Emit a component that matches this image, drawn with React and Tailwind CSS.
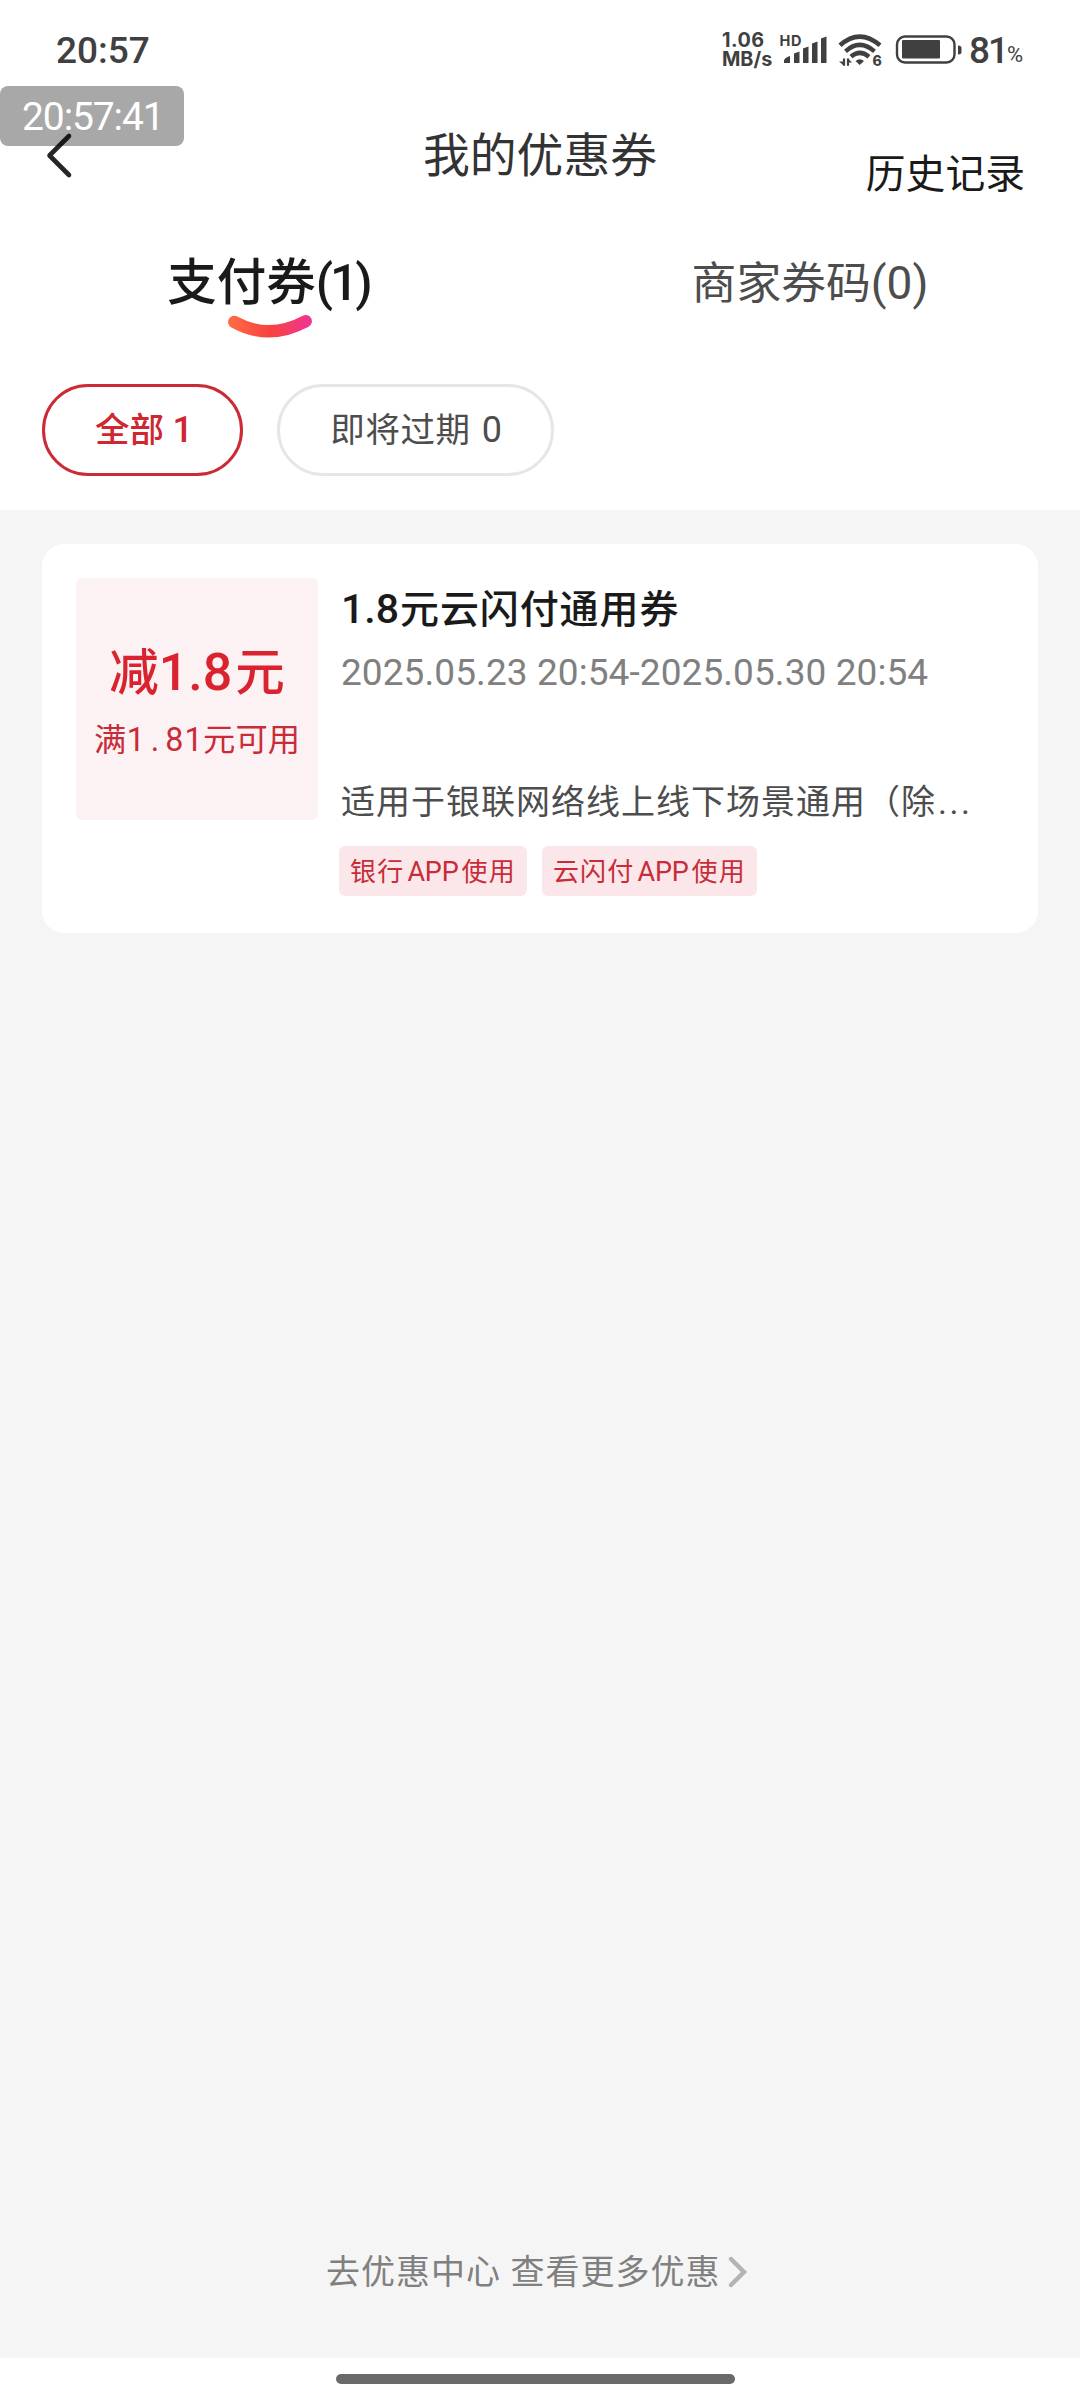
const coupon = {
  amount: "减1.8元",
  title: "1.8元云闪付通用券",
  period: "2025.05.23 20:54-2025.05.30 20:54",
  desc: "适用于银联网络线上线下场景通用（除",
  tags: ["银行APP使用", "云闪付APP使用"],
};

// Latin letters and digits sit a little larger than the Chinese around them
function Mixed({ text, className }) {
  return text.split(/([\w.()]+)/).map((part, i) =>
    i % 2 ? <span key={i} className={className}>{part}</span> : part
  );
}

function SignalIcon() {
  return (
    <svg className="ml-[5px] h-[36px] w-[50px]" viewBox="778 32 50 36" fill="#404040">
      <text x="779.5" y="46" fontSize="14.500" fontWeight="700" fontFamily="Inter, sans-serif" textLength="22">HD</text>
      <path d="M784 63V61q0-3 6-5V63ZM794 63V53.5l5.500-2V63ZM803 63V48.500l5.500-2V63ZM812 63V43.500l5.500-2V63ZM821 63V38.500l5.500-2V63Z" />
    </svg>
  );
}

function WifiIcon() {
  return (
    <svg className="ml-[10px] h-[36px] w-[46px] overflow-visible" viewBox="838 32 46 36" fill="none" stroke="#404040">
      <path d="M840 45.300Q859.500 27.800 880 45.300" strokeWidth="4.600" />
      <path d="M845.500 51.300Q859.500 38.500 874.500 51.300" strokeWidth="4.400" />
      <path d="M851 56.700Q859.500 49 869 56.700" strokeWidth="4.400" />
      <path d="M855.500 61Q859.700 57.500 864 61L859.700 65Z" fill="#404040" stroke="none" />
      <path d="M844 58.500V65.800M848 65.800V58.500" strokeWidth="2.200" />
      <path d="M839 61.500H844V65.800ZM848 58.500L852 62.500H848Z" fill="#404040" stroke="none" />
      <text x="872.500" y="66" fontSize="14" fontWeight="800" fontFamily="Inter, sans-serif" fill="#404040" stroke="none">6</text>
    </svg>
  );
}

function BatteryIcon() {
  return (
    <svg className="ml-[11px] h-[36px] w-[68px]" viewBox="895 32 68 36" fill="none">
      <rect x="897" y="36.500" width="57.500" height="26" rx="8" stroke="#404040" strokeWidth="2.400" />
      <rect x="902" y="40" width="38" height="18.500" rx="1" fill="#404040" />
      <path d="M958 45.500q3.500 0 3.500 2.500v4q0 2.500-3.500 2.500Z" fill="#404040" />
    </svg>
  );
}

function StatusBar() {
  return (
    <div className="flex h-[100px] items-center justify-between pl-14 pr-[53px] text-[#404040]">
      <span className="text-[37px] font-medium leading-none">20:57</span>
      <div className="flex items-center">
        <div className="w-[51px] whitespace-nowrap font-['Inter',sans-serif] text-[19.800px] font-bold leading-[19px]">
          <div className="tracking-[0.5px]">1.06</div>
          <div>MB/s</div>
        </div>
        <SignalIcon />
        <WifiIcon />
        <BatteryIcon />
        <span className="ml-[6px] text-[37px] font-medium leading-none tracking-[-2px]">81</span>
        <span className="mt-[10px] w-[20px] text-[22px] leading-none">%</span>
      </div>
    </div>
  );
}

function Header() {
  return (
    <header className="grid h-[110px] grid-cols-3 items-center">
      <svg className="ml-[44px] h-[50px] w-[32px]" viewBox="44 130 32 50" fill="none" stroke="#262626" strokeWidth="4.600" strokeLinecap="round" strokeLinejoin="round">
        <path d="M69 136L49.500 155.500L69 175" />
      </svg>
      <h1 className="mt-[2px] text-center text-[46.800px] leading-none text-[#333]">我的优惠券</h1>
      <span className="mr-[55px] mt-[40px] text-right text-[39.800px] leading-none text-[#1a1a1a]">历史记录</span>
    </header>
  );
}

function Tabs() {
  return (
    <div className="grid h-[174px] grid-cols-2">
      <div className="flex flex-col items-center pt-[47px]">
        <span className="mr-[3px] text-[49.500px] font-medium leading-[52px] text-[#1a1a1a]">
          <Mixed text="支付券(1)" className="text-[50px] leading-none tracking-[-3px]" />
        </span>
        <svg className="mt-[5px] h-[26px] w-[88px]" viewBox="226 314 88 26" fill="none">
          <defs>
            <linearGradient id="smile" x1="226" y1="326" x2="314" y2="320" gradientUnits="userSpaceOnUse">
              <stop offset="0" stopColor="#ff6f45" />
              <stop offset="0.500" stopColor="#f8423f" />
              <stop offset="1" stopColor="#f0339b" />
            </linearGradient>
          </defs>
          <path d="M234.300 322Q269 341 305.700 321.300" stroke="url(#smile)" strokeWidth="12.400" strokeLinecap="round" />
        </svg>
      </div>
      <div className="flex justify-center pt-[48px]">
        <span className="text-[44.800px] leading-[52px] text-[#4d4d4d]">
          <Mixed text="商家券码(0)" className="text-[46px] leading-none" />
        </span>
      </div>
    </div>
  );
}

function CouponCard() {
  return (
    <div className="mx-[42px] mt-[34px] flex h-[389px] rounded-[22px] bg-white pl-[34px] pt-[34px]">
      <div className="flex h-[242px] w-[242px] flex-col items-center rounded-md bg-[#fcf2f4] pt-[68px] text-[#d9232e]">
        <span className="whitespace-nowrap text-[49.500px] font-medium leading-[54px]">
          <Mixed text={coupon.amount} className="mr-[3px] text-[52px] leading-none" />
        </span>
        <span className="mt-[20px] flex text-[32.300px] leading-[40px] text-[#c92c38]">
          满
          {"1.81".split("").map((c, i) => (
            <span key={i} className="w-[19.2px] text-center">{c}</span>
          ))}
          元可用
        </span>
      </div>
      <div className="ml-[23px] flex flex-col">
        <h2 className="mt-[9px] text-[39px] font-medium leading-[46px] tracking-[0.9px] text-[#1a1a1a]">
          <Mixed text={coupon.title} className="mr-[1px] text-[41px] leading-none tracking-normal" />
        </h2>
        <p className="mt-[18px] text-[37px] leading-[44px] tracking-[0.08px] text-[#808080]">{coupon.period}</p>
        <p className="mt-[87px] whitespace-nowrap text-[34px] leading-[40px] tracking-[1px] text-[#4d4d4d]">
          {coupon.desc}
          <span className="ml-[2px] tracking-[2.5px]">...</span>
        </p>
        <div className="-ml-[2px] mt-[24px] flex gap-[15px]">
          {coupon.tags.map((tag) => (
            <span key={tag} className="h-[50px] rounded-md bg-[#fbe7e9] px-[11px] text-[26px] leading-[53px] tracking-[1.2px] text-[#c92c38]">
              <Mixed text={tag} className="mx-[3px] text-[27px] leading-none tracking-[-0.2px]" />
            </span>
          ))}
        </div>
      </div>
    </div>
  );
}

export default function App() {
  return (
    <div className="relative flex h-[2400px] w-[1080px] flex-col bg-white font-['Roboto','Noto_Sans_CJK_SC',sans-serif]">
      <StatusBar />
      <Header />
      <Tabs />

      <div className="flex h-[126px] gap-[34px] pl-[42px]">
        <button className="h-[92px] w-[201px] rounded-full border-3 border-[#cc2a35] pl-[3px] pt-[2px] text-[34.500px] font-medium text-[#d0262f]">
          <Mixed text="全部 1" className="text-[36px] leading-none" />
        </button>
        <button className="h-[92px] w-[277px] rounded-full border-3 border-[#e6e6e6] pl-[2px] pt-[2px] text-[34.500px] tracking-[0.6px] text-[#4d4d4d]">
          <Mixed text="即将过期 0" className="ml-[2px] text-[36px] leading-none" />
        </button>
      </div>

      <main className="flex h-[1848px] flex-col justify-between bg-[#f5f5f5]">
        <CouponCard />
        <div className="mb-[61px] flex items-center pl-[326px]">
          <span className="text-[34px] leading-[50px] tracking-[1px] text-[#808080]">去优惠中心 查看更多优惠</span>
          <svg className="ml-[8px] h-[34px] w-[22px]" viewBox="0 0 22 34" fill="none" stroke="#b3b3b3" strokeWidth="4.400" strokeLinecap="round">
            <path d="M3 4L16 17L3 30" />
          </svg>
        </div>
      </main>

      <div className="flex h-[42px] justify-center pr-[9px] pt-4">
        <div className="h-[10px] w-[399px] rounded-full bg-[#6a6a6a]" />
      </div>

      {/* floating clock overlay */}
      <div className="absolute left-0 top-[86px] flex h-[60px] w-[184px] items-center rounded-lg bg-black/34 pl-[22px] pt-[2px] text-[39px] leading-none tracking-[-1.1px] text-white">
        20:57:41
      </div>
    </div>
  );
}
